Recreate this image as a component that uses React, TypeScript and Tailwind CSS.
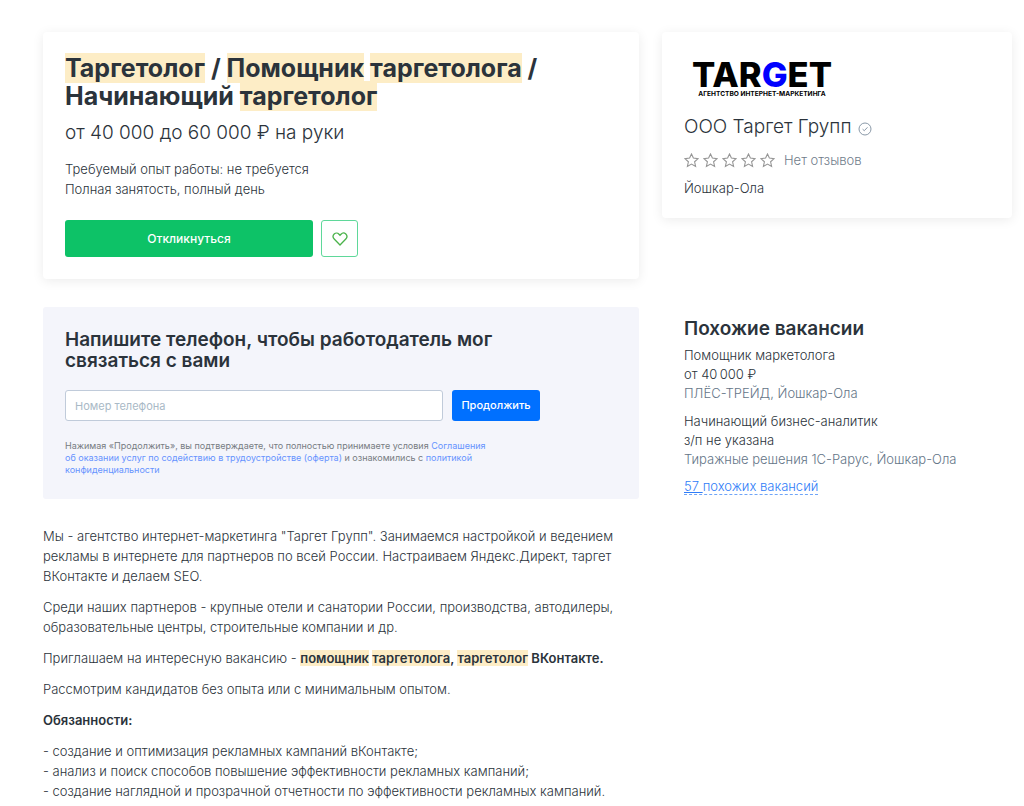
import React, { useState } from 'react';

interface SimilarVacancy {
  title: string;
  salary: string;
  company: string;
}

const similarVacancies: SimilarVacancy[] = [
  {
    title: 'Помощник маркетолога',
    salary: 'от 40\u202F000 ₽',
    company: 'ПЛЁС-ТРЕЙД, Йошкар-Ола',
  },
  {
    title: 'Начинающий бизнес-аналитик',
    salary: 'з/п не указана',
    company: 'Тиражные решения 1С-Рарус, Йошкар-Ола',
  },
];

const duties = [
  '- создание и оптимизация рекламных кампаний вКонтакте;',
  '- анализ и поиск способов повышение эффективности рекламных кампаний;',
  '- создание наглядной и прозрачной отчетности по эффективности рекламных кампаний.',
];

// Search term highlight
const Mark: React.FC<{ children: React.ReactNode }> = ({ children }) => (
  <mark className="bg-[#fdedc6] text-inherit">{children}</mark>
);

const StarIcon = () => (
  <svg viewBox="0 0 15 15" className="h-[15px] w-[15px]" fill="none" stroke="#969696" strokeWidth="1.1" aria-hidden="true">
    <path d="M7.5 1 9.4 5.1 14 5.7 10.6 8.8 11.6 13.4 7.5 11.1 3.4 13.4 4.4 8.8 1 5.7 5.6 5.1Z" />
  </svg>
);

const HeartIcon = () => (
  <svg viewBox="0 0 16 16" className="h-4 w-4" fill="none" stroke="#4bb34b" strokeWidth="1.3" aria-hidden="true">
    <path d="M8 14 2.2 8C.8 6.5.9 4.3 2.2 3 3.6 1.7 5.7 1.8 7 3.2L8 4.3 9 3.2C10.3 1.8 12.4 1.7 13.8 3 15.1 4.3 15.2 6.5 13.8 8Z" />
  </svg>
);

const VerifiedIcon = () => (
  <svg viewBox="0 0 14 14" className="mt-[3px] h-[14px] w-[14px]" fill="none" stroke="#8a99a8" aria-hidden="true">
    <circle cx="7" cy="7" r="6" />
    <path d="M4.6 7.2 6.3 8.7 9.5 5.3" />
  </svg>
);

const CompanyLogo = () => (
  <svg viewBox="0 0 150 50" className="h-[50px] w-[150px]" role="img" aria-label="TARGET">
    <g fontFamily="Inter, sans-serif" textAnchor="middle">
      <text x="78" y="33" fontSize="34.5" fontWeight="800">
        TAR<tspan fill="#0000ff">G</tspan>ET
      </text>
      <text x="78" y="42" fontSize="6.6" fontWeight="700">
        АГЕНТСТВО ИНТЕРНЕТ-МАРКЕТИНГА
      </text>
    </g>
  </svg>
);

const VacancyCard = () => {
  const [isFavorite, setIsFavorite] = useState(false);

  return (
    <section className="rounded-sm bg-white p-[22px] shadow-[0_2px_12px_rgba(0,0,0,0.08)]">
      <h1 className="max-w-[500px] text-[25px] leading-7 font-bold">
        <Mark>Таргетолог</Mark> / <Mark>Помощник</Mark> <Mark>таргетолога</Mark> / Начинающий <Mark>таргетолог</Mark>
      </h1>
      <p className="mt-[11px] text-[19px] leading-6 font-light">от 40 000 до 60 000 ₽ на руки</p>
      <div className="mt-[14px] text-[13px] leading-5 font-light">
        <p>Требуемый опыт работы: не требуется</p>
        <p>Полная занятость, полный день</p>
      </div>
      <div className="mt-[21px] flex gap-2">
        <button type="button" className="h-[37px] w-[248px] rounded-[3px] bg-[#0dc267] text-xs font-medium text-white">
          Откликнуться
        </button>
        <button
          type="button"
          aria-label="В избранное"
          aria-pressed={isFavorite}
          onClick={() => setIsFavorite(!isFavorite)}
          className="flex h-[37px] w-[37px] items-center justify-center rounded-[3px] border border-[#5fd89a]"
        >
          <HeartIcon />
        </button>
      </div>
    </section>
  );
};

const PhoneForm = () => {
  const [phone, setPhone] = useState('');

  return (
    <section className="mt-7 rounded-[3px] bg-[#f4f5fb] px-[22px] pt-[22px] pb-[23px]">
      <h2 className="max-w-[475px] text-[19px] leading-[21px] font-semibold">
        Напишите телефон, чтобы работодатель мог связаться с вами
      </h2>
      <form className="mt-[19px] flex max-w-[475px] gap-[9px]" onSubmit={(e) => e.preventDefault()}>
        <input
          type="tel"
          aria-label="Номер телефона"
          placeholder="Номер телефона"
          value={phone}
          onChange={(e) => setPhone(e.target.value)}
          className="h-[31px] min-w-0 flex-1 rounded-[3px] border border-[#c0cbda] bg-white px-[9px] text-[11px] placeholder:text-[#a9b9c6]"
        />
        <button type="submit" className="h-[31px] w-[88px] rounded-[3px] bg-[#0070ff] text-[11px] font-medium text-white">
          Продолжить
        </button>
      </form>
      <p className="mt-[19px] max-w-[430px] text-[9px] leading-3 text-[#777c82]">
        Нажимая «Продолжить», вы подтверждаете, что полностью принимаете условия{' '}
        <a href="#agreement" className="text-[#6693ff]">
          Соглашения об оказании услуг по содействию в трудоустройстве (оферта)
        </a>{' '}
        и ознакомились с{' '}
        <a href="#privacy" className="text-[#6693ff]">
          политикой конфиденциальности
        </a>
      </p>
    </section>
  );
};

const Description = () => (
  <section className="mt-[27px] flex max-w-[590px] flex-col gap-[11px] text-[13px] leading-5 font-light">
    <p>
      Мы - агентство интернет-маркетинга "Таргет Групп". Занимаемся настройкой и ведением рекламы в интернете для
      партнеров по всей России. Настраиваем Яндекс.Директ, таргет ВКонтакте и делаем SEO.
    </p>
    <p>
      Среди наших партнеров - крупные отели и санатории России, производства, автодилеры, образовательные центры,
      строительные компании и др.
    </p>
    <p>
      Приглашаем на интересную вакансию -{' '}
      <strong className="font-semibold">
        <Mark>помощник</Mark> <Mark>таргетолога</Mark>, <Mark>таргетолог</Mark> ВКонтакте.
      </strong>
    </p>
    <p>Рассмотрим кандидатов без опыта или с минимальным опытом.</p>
    <p className="font-semibold">Обязанности:</p>
    <div>
      {duties.map((duty) => (
        <p key={duty}>{duty}</p>
      ))}
    </div>
  </section>
);

const CompanyCard = () => (
  <section className="rounded-sm bg-white px-[22px] pt-[22px] pb-5 shadow-[0_2px_12px_rgba(0,0,0,0.08)]">
    <CompanyLogo />
    <h2 className="mt-[11px] flex items-center gap-[6px] text-[19px] leading-6 font-light">
      ООО Таргет Групп
      <VerifiedIcon />
    </h2>
    <div className="mt-[11px] flex items-center gap-[9px] text-[13px] leading-5 font-light text-[#6f7c8a]">
      <div className="flex gap-1">
        {[1, 2, 3, 4, 5].map((star) => (
          <StarIcon key={star} />
        ))}
      </div>
      Нет отзывов
    </div>
    <p className="mt-2 text-[13px] leading-5 font-light">Йошкар-Ола</p>
  </section>
);

const SimilarVacancies = () => (
  <section className="mt-[99px] px-[22px] text-[13px] leading-[19px] font-light">
    <h2 className="text-[19px] leading-6 font-semibold">Похожие вакансии</h2>
    <ul className="mt-[5px] flex flex-col gap-[9px]">
      {similarVacancies.map((vacancy) => (
        <li key={vacancy.title}>
          <p>{vacancy.title}</p>
          <p>{vacancy.salary}</p>
          <p className="text-[#647587]">{vacancy.company}</p>
        </li>
      ))}
    </ul>
    <a href="#similar" className="mt-[9px] inline-block border-b border-dashed border-[#6fa5f8] leading-4 text-[#2f7df8]">
      <span className="underline">57 </span>похожих вакансий
    </a>
  </section>
);

const App: React.FC = () => (
  <div className="flex min-h-screen items-start gap-[23px] bg-white pt-8 pr-3 pl-[43px] font-['Inter',sans-serif] text-[#2b333b]">
    <main className="min-w-0 flex-1">
      <VacancyCard />
      <PhoneForm />
      <Description />
    </main>
    <aside className="w-[350px] shrink-0">
      <CompanyCard />
      <SimilarVacancies />
    </aside>
  </div>
);

export default App;
